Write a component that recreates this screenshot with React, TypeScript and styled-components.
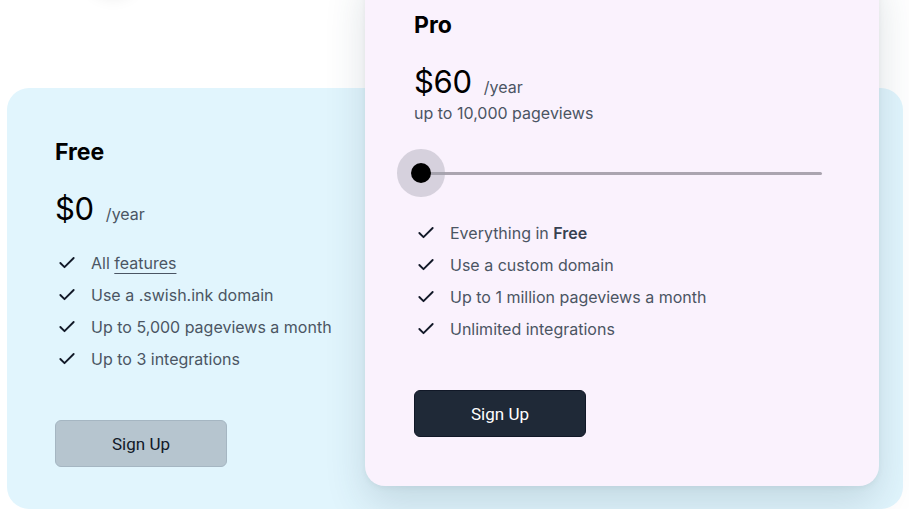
import styled, { createGlobalStyle } from "styled-components"
import { Check } from "lucide-react"

const GlobalStyle = createGlobalStyle`
    html, body {
        margin: 0;
        padding: 0;
        background: #ffffff;
        overflow: hidden;
    }
    body {
        font-family: Inter, "Noto Sans", "Liberation Sans", sans-serif;
    }
`

function Features({ items }: { items: React.ReactNode[] }) {
    return (
        <List>
            {items.map((item, i) => (
                <Item key={i}>
                    <Check size={20} strokeWidth={2.25} color="#111827" />
                    <span>{item}</span>
                </Item>
            ))}
        </List>
    )
}

export default function App() {
    // built in here so the styled parts below are defined by the time they are used
    const freeFeatures = [
        <>All <Link>features</Link></>,
        "Use a .swish.ink domain",
        "Up to 5,000 pageviews a month",
        "Up to 3 integrations",
    ]
    const proFeatures = [
        <>Everything in <b>Free</b></>,
        "Use a custom domain",
        "Up to 1 million pageviews a month",
        "Unlimited integrations",
    ]

    return (
        <>
            <GlobalStyle />
            <Page>
                {/* knob of something above the fold, only its shadow shows */}
                <Knob />
                <Board>
                    <FreeColumn>
                        <Title>Free</Title>
                        <PriceRow>
                            <Price>$0</Price>
                            <Per>/year</Per>
                        </PriceRow>
                        <Features items={freeFeatures} />
                        <Button $dark={false}>Sign Up</Button>
                    </FreeColumn>
                    <ProCard>
                        <Title>Pro</Title>
                        <PriceRow>
                            <Price>$60</Price>
                            <Per>/year</Per>
                        </PriceRow>
                        <Note>up to 10,000 pageviews</Note>
                        <Slider>
                            <Track />
                            <Thumb style={{ left: "0%" }} />
                        </Slider>
                        <Features items={proFeatures} />
                        <Button $dark>Sign Up</Button>
                    </ProCard>
                </Board>
            </Page>
        </>
    )
}

const Page = styled.div`
    position: relative;
    width: 909px;
    height: 509px;
    padding: 88px 0 0 7px;
    box-sizing: border-box;
    overflow: hidden;
`

const Knob = styled.div`
    position: absolute;
    left: 86px;
    top: -62px;
    width: 54px;
    height: 54px;
    border-radius: 50%;
    background: #ffffff;
    box-shadow: 0 6px 16px rgba(0, 0, 0, 0.08);
`

const Board = styled.div`
    display: flex;
    align-items: flex-start;
    width: 896px;
    height: 421px;
    border-radius: 22px;
    background: #e1f5fd;
`

const FreeColumn = styled.div`
    display: flex;
    flex-direction: column;
    align-items: flex-start;
    width: 358px;
    box-sizing: border-box;
    padding: 50px 0 0 48px;
`

const ProCard = styled.div`
    display: flex;
    flex-direction: column;
    align-items: flex-start;
    width: 514px;
    margin-top: -123px;
    box-sizing: border-box;
    padding: 46px 0 49px 49px;
    border-radius: 20px;
    background: #faf2fd;
    box-shadow: 0 18px 40px rgba(40, 70, 90, 0.16), 0 2px 6px rgba(0, 0, 0, 0.05);
`

const Title = styled.h3`
    margin: 0;
    font-size: 23px;
    line-height: 28px;
    font-weight: 700;
    color: #000000;
`

const PriceRow = styled.div`
    display: flex;
    align-items: baseline;
    gap: 12px;
    margin-top: 25px;
`

const Price = styled.span`
    font-size: 31px;
    line-height: 36px;
    font-weight: 400;
    color: #000000;
    letter-spacing: -0.3px;
`

const Per = styled.span`
    font-size: 16px;
    color: #4b5563;
`

const Note = styled.p`
    margin: 1px 0 0;
    font-size: 16px;
    line-height: 24px;
    color: #4b5563;
`

const Slider = styled.div`
    position: relative;
    width: 401px;
    height: 48px;
    margin: 24px 0 0 7px;
    display: flex;
    align-items: center;
`

const Track = styled.div`
    width: 100%;
    height: 3px;
    border-radius: 2px;
    background: #aba5b0;
`

const Thumb = styled.div`
    position: absolute;
    top: 50%;
    width: 20px;
    height: 20px;
    border-radius: 50%;
    background: #000000;
    transform: translate(-50%, -50%);
    box-shadow: 0 0 0 14px rgba(160, 160, 172, 0.4);
`

const List = styled.ul`
    list-style: none;
    margin: 20px 0 0;
    padding: 0;
    display: flex;
    flex-direction: column;
`

const Item = styled.li`
    display: flex;
    align-items: center;
    gap: 14px;
    height: 32px;
    padding-left: 2px;
    font-size: 16px;
    color: #4b5563;

    b {
        font-weight: 600;
        color: #374151;
    }
`

const Link = styled.span`
    text-decoration: underline;
    text-underline-offset: 4px;
    text-decoration-thickness: 1px;
`

const Button = styled.button<{ $dark: boolean }>`
    margin-top: 45px;
    width: 172px;
    height: 47px;
    border-radius: 6px;
    border: 1px solid ${(p) => (p.$dark ? "#111827" : "#a5b6c2")};
    background: ${(p) => (p.$dark ? "#1f2937" : "#b6c5cf")};
    color: ${(p) => (p.$dark ? "#ffffff" : "#111827")};
    font-family: Roboto, Inter, sans-serif;
    font-size: 17px;
    cursor: pointer;
`
